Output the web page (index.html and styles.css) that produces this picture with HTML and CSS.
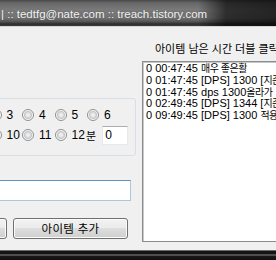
FILE: index.html
```html
<!DOCTYPE html>
<html lang="ko">
<head>
<meta charset="utf-8">
<link rel="stylesheet" href="styles.css">
</head>
<body>
<div class="window">
  <div class="titlebar"><span class="title">| :: tedtfg@nate.com :: treach.tistory.com</span></div>
  <div class="client">
    <div class="left">
      <div class="group">
        <div class="radio-row">
          <label class="opt"><span class="radio"></span>0</label>
          <label class="opt"><span class="radio"></span>1</label>
          <label class="opt"><span class="radio"></span>2</label>
          <label class="opt"><span class="radio"></span>3</label>
          <label class="opt"><span class="radio"></span>4</label>
          <label class="opt"><span class="radio"></span>5</label>
          <label class="opt"><span class="radio"></span>6</label>
        </div>
        <div class="radio-row">
          <label class="opt"><span class="radio"></span>7</label>
          <label class="opt"><span class="radio"></span>8</label>
          <label class="opt"><span class="radio"></span>9</label>
          <label class="opt"><span class="radio"></span>10</label>
          <label class="opt"><span class="radio"></span>11</label>
          <label class="opt"><span class="radio"></span>12</label>
          <div class="minute"><span class="ko">분</span><span class="edit">0</span></div>
        </div>
      </div>
      <div class="textinput"></div>
      <div class="buttons">
        <button class="btn"></button>
        <button class="btn"><span class="ko btn-label">아이템 추가</span></button>
      </div>
    </div>
    <div class="right">
      <div class="hint ko">아이템 남은 시간 더블 클릭</div>
      <div class="listbox">
        <div class="item">0 00:47:45 <span class="ko-list">매우 좋은활</span></div>
        <div class="item">0 01:47:45 [DPS] 1300 [<span class="ko-list">지존</span>]</div>
        <div class="item">0 01:47:45 dps 1300<span class="ko-list">올라가</span></div>
        <div class="item">0 02:49:45 [DPS] 1344 [<span class="ko-list">지존</span>]</div>
        <div class="item">0 09:49:45 [DPS] 1300 <span class="ko-list">적용</span></div>
      </div>
    </div>
  </div>
  <div class="bottom-frame"></div>
</div>
</body>
</html>
```

FILE: styles.css
```css
html, body {
  margin: 0;
  padding: 0;
  overflow: hidden;
}

body {
  width: 276px;
  height: 260px;
  background: #f0f0f0;
  font-family: "Liberation Sans", "Noto Sans CJK KR", sans-serif;
  color: #000;
}

.ko {
  font-family: "Noto Sans CJK KR", sans-serif;
  font-size: 11px;
}

.ko-list {
  font-family: "Noto Sans CJK KR", sans-serif;
  font-size: 10px;
  letter-spacing: -0.5px;
}

.window {
  display: flex;
  flex-direction: column;
  height: 260px;
}

.titlebar {
  flex: none;
  height: 26px;
  border-bottom: 1px solid #d4d4d4;
  display: flex;
  align-items: center;
  padding-left: 1px;
  background:
    linear-gradient(to right, rgba(0,0,0,0) 0, rgba(0,0,0,0) 198px, rgba(0,0,0,.62) 226px, rgba(0,0,0,.7) 100%),
    linear-gradient(to bottom, #484848 0, #686868 3px, #7a7a7a 10px, #747474 18px, #505050 22px, #2c2c2c 24px, #3c3c3c 26px);
}

.title {
  font-size: 11.5px;
  color: #f2f2f2;
  white-space: nowrap;
  text-shadow: 0 0 2px rgba(60,60,60,.6);
  margin-top: 1px;
}

.client {
  flex: 1;
  display: flex;
  min-height: 0;
}

.left {
  flex: none;
  width: 250px;
  margin-left: -114px;
  padding-top: 71px;
}

.group {
  border: 1px solid #d5dfe5;
  border-radius: 3px;
  padding: 6px 0 10px 5px;
}

.radio-row {
  display: grid;
  grid-template-columns: repeat(6, 32.5px) auto;
  height: 20px;
  align-items: center;
}

.opt {
  display: flex;
  align-items: center;
  gap: 5px;
  font-size: 12px;
  white-space: nowrap;
}

.radio {
  flex: none;
  width: 12px;
  height: 12px;
  box-sizing: border-box;
  border: 1px solid #8e8f8f;
  border-radius: 50%;
  background: radial-gradient(circle, #f6f6f6 0, #e4e4e4 2px, #c4c6c8 3.5px, #d6d7d8 4px, #fbfbfb 4.6px);
}

.minute {
  display: flex;
  align-items: center;
  margin-left: -1px;
}

.edit {
  margin-left: 6px;
  width: 26px;
  height: 19px;
  box-sizing: border-box;
  background: #fff;
  border: 1px solid #e3e9ef;
  border-top-color: #abadb3;
  font-size: 12px;
  line-height: 17px;
  padding-left: 2px;
}

.textinput {
  margin-top: 24px;
  margin-right: 5px;
  height: 21px;
  box-sizing: border-box;
  background: #fff;
  border: 1px solid #a9c8e2;
  border-top-color: #5f93c0;
}

.buttons {
  margin-top: 17px;
  display: flex;
  justify-content: flex-end;
  gap: 6px;
  padding-right: 8px;
}

.btn {
  width: 115px;
  height: 21px;
  padding: 0;
  border: 1px solid #707070;
  border-radius: 3px;
  background: linear-gradient(to bottom, #f2f2f2 0, #ebebeb 49%, #dddddd 50%, #cfcfcf 100%);
  box-shadow: inset 0 0 0 1px #fbfbfb;
  color: #000;
  line-height: 18px;
}

.btn-label {
  font-size: 11.5px;
  letter-spacing: 0.3px;
}

.right {
  flex: none;
  width: 200px;
  margin-left: 6px;
  padding-top: 14px;
}

.hint {
  height: 14px;
  line-height: 14px;
  padding-left: 13px;
  white-space: nowrap;
}

.listbox {
  margin-top: 6px;
  height: 181px;
  box-sizing: border-box;
  background: #fff;
  border: 1px solid #8c8c8c;
  box-shadow: inset 1px 1px 0 #c8c8c8;
  padding-left: 3px;
  font-size: 11px;
  line-height: 11.8px;
  white-space: nowrap;
  overflow: hidden;
}

.item {
  height: 11.8px;
}

.bottom-frame {
  flex: none;
  height: 10px;
  background: linear-gradient(to bottom, #6a6a6a 0, #6a6a6a 1px, #141414 1px, #141414 4px, #4e4e4e 4px, #4e4e4e 6px, #181818 6px, #101010 100%);
}
```
